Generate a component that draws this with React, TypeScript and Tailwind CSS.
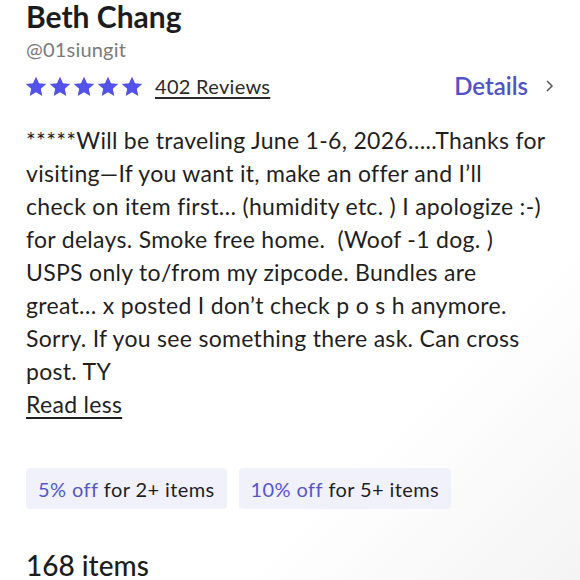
import React from 'react';

const lines = [
  '*****Will be traveling June 1-6, 2026…..Thanks for',
  'visiting—If you want it, make an offer and I’ll',
  'check on item first… (humidity etc. ) I apologize :-)',
  'for delays. Smoke free home.  (Woof -1 dog. )',
  'USPS only to/from my zipcode. Bundles are',
  'great… x posted I don’t check p o s h anymore.',
  'Sorry. If you see something there ask. Can cross',
  'post. TY',
];

const Star = () => (
  <svg width="22" height="21" viewBox="0 0 24 23" className="shrink-0">
    <path
      d="M12 0.8l3.3 7.1 7.8.9-5.8 5.3 1.6 7.7L12 17.9l-6.9 3.9 1.6-7.7L.9 8.8l7.8-.9z"
      fill="#5252e8"
    />
  </svg>
);

const DiscountChip = ({ off, rest }: { off: string; rest: string }) => (
  <div className="h-[41px] px-3 flex items-center rounded bg-[#f1f1fb] text-[20px] tracking-[0.4px] whitespace-nowrap">
    <span className="text-[#5656cc]">{off}</span>
    <span className="text-[#1f1f1f]">&nbsp;{rest}</span>
  </div>
);

export default function App() {
  return (
    <div
      className="w-[580px] h-[580px] overflow-hidden bg-gradient-to-br from-white from-70% to-[#f4f4f4] text-[#1f1f1f]"
      style={{ fontFamily: 'Lato, "Open Sans", sans-serif' }}
    >
      <div className="pl-[26px] pr-[26px]">
        <h1 className="text-[30px] leading-[32px] font-bold text-[#1c1c1c]">Beth Chang</h1>
        <div className="mt-[4px] text-[20px] leading-[26px] text-[#7a7a7a] tracking-[0.2px]">@01siungit</div>
        <div className="mt-[10px] flex items-center">
          <div className="flex items-center gap-[2px] -ml-[1px]">
            <Star />
            <Star />
            <Star />
            <Star />
            <Star />
          </div>
          <span className="ml-[12px] text-[20px] leading-[26px] tracking-[0.3px] underline underline-offset-[3px] text-[#2a2a2a]">
            402 Reviews
          </span>
          <span className="ml-auto text-[24px] leading-[28px] font-semibold text-[#5252c8]">Details</span>
          <svg width="12" height="14" viewBox="0 0 12 14" className="ml-[16px] mr-[-2px]">
            <path d="M3 2l5 5-5 5" fill="none" stroke="#555" strokeWidth="1.5" />
          </svg>
        </div>
        <div className="mt-[24px] text-[23px] leading-[33px] tracking-[0.3px] text-[#1f1f1f]">
          {lines.map((l, i) => (
            <div key={i} className="whitespace-pre">
              {l}
            </div>
          ))}
          <div className="underline underline-offset-[4px]">Read less</div>
        </div>
        <div className="mt-[47px] flex gap-3">
          <DiscountChip off="5% off" rest="for 2+ items" />
          <DiscountChip off="10% off" rest="for 5+ items" />
        </div>
        <div className="mt-[38px] text-[28px] leading-[36px] font-medium text-[#1c1c1c]">168 items</div>
      </div>
    </div>
  );
}
